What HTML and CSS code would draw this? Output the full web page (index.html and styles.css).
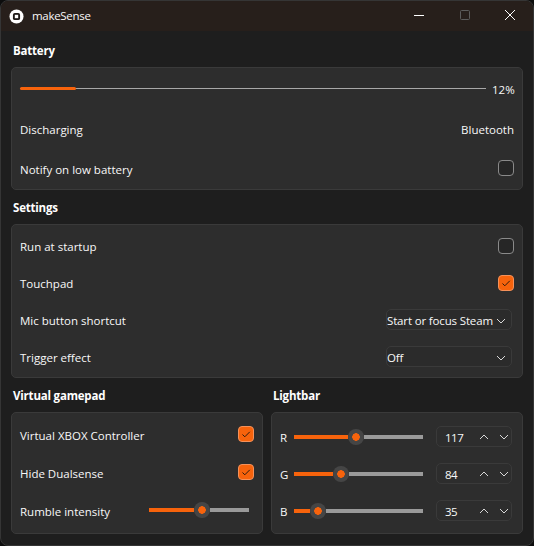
FILE: index.html
```html
<!DOCTYPE html>
<html>
<head>
    <title>makeSense</title>
    <link rel="stylesheet" href="styles.css">
</head>
<body>
    <div class="window">
        <div class="titlebar">
            <svg class="app-icon" width="15" height="15" viewBox="0 0 16 16">
                <circle cx="8" cy="8" r="7.5" fill="#fff"/>
                <rect x="4.2" y="4.2" width="7.6" height="7.6" rx="2" fill="#1f1a18"/>
                <rect x="6.2" y="6.2" width="3.6" height="3.6" fill="#fff"/>
            </svg>
            <span class="app-name">makeSense</span>
            <div class="win-buttons">
                <svg width="12" height="12" viewBox="0 0 12 12"><path d="M1 6.5h10" stroke="#fff" fill="none"/></svg>
                <svg width="12" height="12" viewBox="0 0 12 12"><rect x="1.5" y="1.5" width="9" height="9" rx="1" stroke="#5c5c5c" fill="none"/></svg>
                <svg width="12" height="12" viewBox="0 0 12 12"><path d="M1 1l10 10M11 1L1 11" stroke="#fff" fill="none"/></svg>
            </div>
        </div>

        <div class="content">
            <h2>Battery</h2>
            <div class="card battery-card">
                <div class="battery-row">
                    <div class="progress"><div class="progress-fill" style="width: 12%"></div></div>
                    <span class="battery-value">12%</span>
                </div>
                <div class="row battery-status"><span>Discharging</span><span>Bluetooth</span></div>
                <div class="row battery-notify"><span class="label">Notify on low battery</span><span class="check"></span></div>
            </div>

            <h2>Settings</h2>
            <div class="card settings-card">
                <div class="row"><span class="label">Run at startup</span><span class="check"></span></div>
                <div class="row">
                    <span class="label">Touchpad</span>
                    <span class="check on"><svg width="12" height="12" viewBox="0 0 12 12"><path d="M2.5 6.5l2.3 2.3L9.8 3.8"/></svg></span>
                </div>
                <div class="row">
                    <span class="label">Mic button shortcut</span>
                    <div class="select">Start or focus Steam<svg width="10" height="6" viewBox="0 0 10 6"><path d="M1 1l4 4 4-4"/></svg></div>
                </div>
                <div class="row">
                    <span class="label">Trigger effect</span>
                    <div class="select">Off<svg width="10" height="6" viewBox="0 0 10 6"><path d="M1 1l4 4 4-4"/></svg></div>
                </div>
            </div>

            <div class="columns">
                <div class="col">
                    <h2>Virtual gamepad</h2>
                    <div class="card gamepad-card">
                        <div class="row">
                            <span class="label">Virtual XBOX Controller</span>
                            <span class="check on"><svg width="12" height="12" viewBox="0 0 12 12"><path d="M2.5 6.5l2.3 2.3L9.8 3.8"/></svg></span>
                        </div>
                        <div class="row">
                            <span class="label">Hide Dualsense</span>
                            <span class="check on"><svg width="12" height="12" viewBox="0 0 12 12"><path d="M2.5 6.5l2.3 2.3L9.8 3.8"/></svg></span>
                        </div>
                        <div class="row">
                            <span class="label">Rumble intensity</span>
                            <div class="slider rumble">
                                <div class="slider-fill" style="width: 45px"></div>
                                <div class="thumb"></div>
                                <div class="slider-rest"></div>
                            </div>
                        </div>
                    </div>
                </div>
                <div class="col">
                    <h2>Lightbar</h2>
                    <div class="card lightbar-card">
                        <div class="row">
                            <span class="label channel">R</span>
                            <div class="slider">
                                <div class="slider-fill" style="width: 54px"></div>
                                <div class="thumb"></div>
                                <div class="slider-rest"></div>
                            </div>
                            <div class="spin">
                                <span class="spin-value">117</span>
                                <svg width="10" height="6" viewBox="0 0 10 6"><path d="M1 5l4-4 4 4"/></svg>
                                <svg width="10" height="6" viewBox="0 0 10 6"><path d="M1 1l4 4 4-4"/></svg>
                            </div>
                        </div>
                        <div class="row">
                            <span class="label channel">G</span>
                            <div class="slider">
                                <div class="slider-fill" style="width: 39px"></div>
                                <div class="thumb"></div>
                                <div class="slider-rest"></div>
                            </div>
                            <div class="spin">
                                <span class="spin-value">84</span>
                                <svg width="10" height="6" viewBox="0 0 10 6"><path d="M1 5l4-4 4 4"/></svg>
                                <svg width="10" height="6" viewBox="0 0 10 6"><path d="M1 1l4 4 4-4"/></svg>
                            </div>
                        </div>
                        <div class="row">
                            <span class="label channel">B</span>
                            <div class="slider">
                                <div class="slider-fill" style="width: 16px"></div>
                                <div class="thumb"></div>
                                <div class="slider-rest"></div>
                            </div>
                            <div class="spin">
                                <span class="spin-value">35</span>
                                <svg width="10" height="6" viewBox="0 0 10 6"><path d="M1 5l4-4 4 4"/></svg>
                                <svg width="10" height="6" viewBox="0 0 10 6"><path d="M1 1l4 4 4-4"/></svg>
                            </div>
                        </div>
                    </div>
                </div>
            </div>
        </div>
    </div>
</body>
</html>
```

FILE: styles.css
```css
html, body { margin: 0; height: 100%; background: #0d0d0d; }
body { font-family: "Open Sans", "Noto Sans", sans-serif; font-size: 11.5px; color: #f8f8f8; overflow: hidden; white-space: nowrap; }
.window { box-sizing: border-box; height: 100%; background: #1e1e1e; border: 1px solid #353535; border-radius: 8px; overflow: hidden; }

.titlebar { height: 30px; background: #271f1b; display: flex; align-items: center; padding-left: 8px; }
.app-icon { margin-right: 8px; }
.app-name { letter-spacing: -0.3px; padding-bottom: 2px; }
.win-buttons { margin-left: auto; display: flex; gap: 33.5px; padding-right: 17px; padding-bottom: 2px; }

.content { padding: 2px 10px 0; }
h2 { font-size: 11.5px; font-weight: 700; letter-spacing: -0.2px; margin: 0; padding-left: 2px; height: 34px; line-height: 18px; padding-top: 9px; box-sizing: border-box; color: #fff; }
.card { background: #2d2d2d; border: 1px solid #3a3a3a; border-radius: 5px; box-sizing: border-box; padding: 0 8px; }

.row { display: flex; align-items: center; justify-content: space-between; height: 37px; }
.label { padding-top: 2px; }
.battery-card { height: 123px; }
.battery-row { display: flex; align-items: center; height: 40px; gap: 6px; }
.battery-value { width: 22px; flex: none; text-align: right; padding-top: 2px; }
.battery-status { height: 42px; }
.battery-notify { height: 36px; }
.progress { flex: 1; height: 1px; background: #a8a8a8; position: relative; }
.progress-fill { position: absolute; left: 0; top: -1px; height: 3px; background: #f7630c; border-radius: 2px; }

.settings-card { height: 154px; padding-top: 2px; }
.check { width: 16px; height: 16px; box-sizing: border-box; border: 1px solid #8a8a8a; border-radius: 4px; background: #262626; display: flex; align-items: center; justify-content: center; }
.check.on { background: #f7630c; border-color: #f5915a; }
.check svg path { fill: none; stroke: #2b1a10; stroke-width: 1; }

.select { width: 126px; height: 21px; box-sizing: border-box; border: 1px solid #3a3a3a; border-radius: 5px; background: #2b2b2b; display: flex; align-items: center; justify-content: space-between; padding: 2px 5px 0 0; margin-right: 2px; letter-spacing: -0.15px; }
.select svg path, .spin svg path { fill: none; stroke: #d8d8d8; stroke-width: 1; }

.columns { display: flex; gap: 8px; }
.col { width: 252px; }
.gamepad-card { height: 122px; padding-top: 2px; }
.gamepad-card .row { height: 38px; }
.lightbar-card { height: 122px; padding-top: 5px; }

.slider { display: flex; align-items: center; height: 20px; flex: 1; }
.slider.rumble { flex: none; width: 100px; margin-right: 5px; }
.slider-fill { height: 4px; background: #f7630c; flex: none; }
.slider-rest { height: 4px; background: #9a9a9a; flex: 1; }
.thumb { width: 16px; height: 16px; flex: none; border-radius: 50%; background: radial-gradient(circle, #f7630c 0 3.5px, #454545 4px); }

.channel { width: 14px; flex: none; }
.spin { width: 76px; height: 21px; box-sizing: border-box; flex: none; margin-left: 13px; margin-right: 2px; border: 1px solid #3a3a3a; border-radius: 5px; display: flex; align-items: center; gap: 10px; padding: 1px 2px 0 0; }
.spin-value { flex: 1; padding-left: 8px; letter-spacing: -0.5px; }
```
